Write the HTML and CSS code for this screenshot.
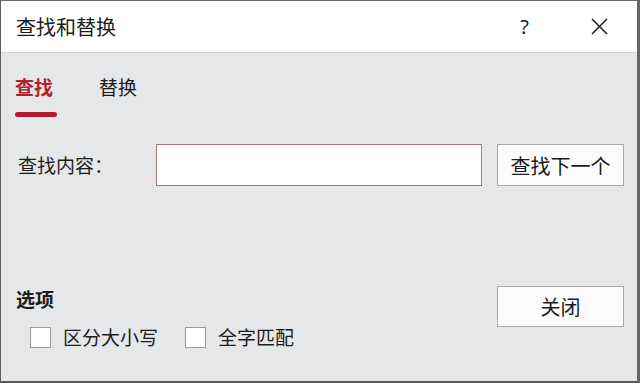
FILE: index.html
```html
<!DOCTYPE html>
<html lang="zh-CN">
<head>
<meta charset="utf-8">
<title>查找和替换</title>
<link rel="stylesheet" href="styles.css">
</head>
<body>
<div class="window">
  <div class="titlebar">
    <div class="title">查找和替换</div>
    <div class="title-actions">
      <span class="help">?</span>
      <span class="close">
        <svg width="17" height="17" viewBox="0 0 17 17"><path d="M1 1 L16 16 M16 1 L1 16" stroke="#1e1e1e" stroke-width="1.5" fill="none"/></svg>
      </span>
    </div>
  </div>
  <div class="content">
    <div class="tabs">
      <div class="tab active"><span class="tab-label">查找</span><span class="tab-bar"></span></div>
      <div class="tab"><span class="tab-label">替换</span></div>
    </div>
    <div class="find-row">
      <label class="find-label">查找内容：</label>
      <div class="find-input"></div>
      <div class="btn">查找下一个</div>
    </div>
    <div class="spacer"></div>
    <div class="bottom">
      <div class="options">
        <div class="options-title">选项</div>
        <div class="checks">
          <div class="check"><span class="box"></span><span class="check-label">区分大小写</span></div>
          <div class="check"><span class="box"></span><span class="check-label">全字匹配</span></div>
        </div>
      </div>
      <div class="btn">关闭</div>
    </div>
  </div>
</div>
</body>
</html>
```
FILE: styles.css
```css
* { box-sizing: border-box; }
html, body { margin: 0; padding: 0; }
body {
  font-family: "Noto Sans CJK SC", "Noto Sans", sans-serif;
  color: #1c1c1c;
  background: #e6e7e9;
}
.window {
  width: 640px;
  height: 383px;
  display: flex;
  flex-direction: column;
  background: #e6e7e9;
  border-left: 1px solid #5e5e5e;
  border-top: 1px solid #6a6a6a;
  border-right: 3px solid #666;
  border-bottom: 2px solid #5a5a5a;
}
.titlebar {
  height: 52px;
  flex: none;
  background: #fff;
  border-bottom: 1px solid #d6d6d8;
  display: flex;
  align-items: center;
  padding-left: 15px;
}
.title {
  font-size: 20px;
  line-height: 28px;
}
.title-actions {
  margin-left: auto;
  display: flex;
  align-items: center;
  margin-right: 29px;
}
.help {
  font-family: "Noto Sans", sans-serif;
  font-size: 20px;
  line-height: 28px;
  margin-right: 62px;
}
.close { display: flex; }
.content {
  flex: 1;
  display: flex;
  flex-direction: column;
  padding: 0 13px 32px 15px;
}
.tabs {
  display: flex;
  gap: 42px;
  padding-top: 21px;
  margin-left: -1px;
}
.tab {
  display: flex;
  flex-direction: column;
  align-items: flex-start;
}
.tab-label {
  font-size: 19px;
  line-height: 26px;
}
.tab.active .tab-label { color: #b3202f; font-weight: bold; }
.tab-bar {
  width: 42px;
  height: 5px;
  margin-top: 12px;
  border-radius: 3px;
  background: #b01a2c;
}
.find-row {
  display: flex;
  align-items: center;
  margin-top: 27px;
}
.find-label {
  width: 140px;
  padding-left: 2px;
  font-size: 19px;
  line-height: 26px;
}
.find-input {
  width: 326px;
  height: 42px;
  background: #fff;
  border: 1px solid #b07078;
}
.btn {
  width: 127px;
  height: 42px;
  margin-left: auto;
  background: #fbfbfb;
  border: 1px solid #a9a9a9;
  display: flex;
  align-items: center;
  justify-content: center;
  font-size: 20px;
}
.spacer { flex: 1; }
.bottom {
  display: flex;
  align-items: flex-start;
}
.options-title {
  font-size: 19px;
  line-height: 26px;
  font-weight: bold;
}
.checks {
  display: flex;
  margin-top: 13px;
  padding-left: 14px;
  gap: 27px;
}
.check {
  display: flex;
  align-items: center;
  height: 24px;
}
.box {
  width: 21px;
  height: 21px;
  background: #fff;
  border: 1px solid #9a9a9a;
  margin-right: 12px;
}
.check-label {
  font-size: 19px;
  line-height: 24px;
}
.bottom .btn { height: 41px; }
```
